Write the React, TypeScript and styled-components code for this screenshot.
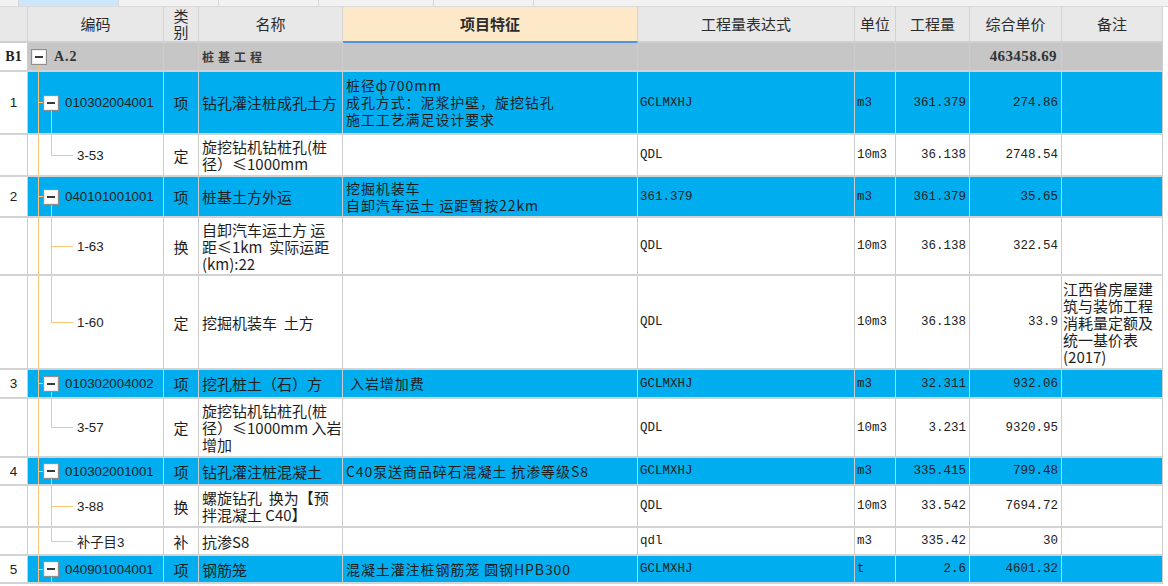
import React from 'react';
import styled, {createGlobalStyle} from 'styled-components';

type Tone = 'group' | 'item' | 'child';

interface BillRow {
    tone: Tone;
    h: number;
    num?: string;
    code: string;
    last?: boolean;
    kind: string;
    name: string;
    feature?: string;
    expr: string;
    unit: string;
    qty: string;
    price: string;
    note?: string;
}

const COLS = '28px 136px 35px 144px 295px 217px 41px 74px 92px 101px';
const ORANGE = '#fdc47a';
const BLUE = '#00aeef';

const rows: BillRow[] = [
    {tone: 'item', h: 63, num: '1', code: '010302004001', kind: '项', name: '钻孔灌注桩成孔土方', feature: '桩径ф700mm\n成孔方式：泥浆护壁，旋挖钻孔\n施工工艺满足设计要求', expr: 'GCLMXHJ', unit: 'm3', qty: '361.379', price: '274.86'},
    {tone: 'child', h: 42, code: '3-53', last: true, kind: '定', name: '旋挖钻机钻桩孔(桩\n径）≤1000mm', expr: 'QDL', unit: '10m3', qty: '36.138', price: '2748.54'},
    {tone: 'item', h: 41, num: '2', code: '040101001001', kind: '项', name: '桩基土方外运', feature: '挖掘机装车\n自卸汽车运土 运距暂按22km', expr: '361.379', unit: 'm3', qty: '361.379', price: '35.65'},
    {tone: 'child', h: 58, code: '1-63', kind: '换', name: '自卸汽车运土方 运\n距≤1km  实际运距\n(km):22', expr: 'QDL', unit: '10m3', qty: '36.138', price: '322.54'},
    {tone: 'child', h: 94, code: '1-60', last: true, kind: '定', name: '挖掘机装车  土方', expr: 'QDL', unit: '10m3', qty: '36.138', price: '33.9', note: '江西省房屋建\n筑与装饰工程\n消耗量定额及\n统一基价表\n(2017)'},
    {tone: 'item', h: 29, num: '3', code: '010302004002', kind: '项', name: '挖孔桩土（石）方', feature: ' 入岩增加费', expr: 'GCLMXHJ', unit: 'm3', qty: '32.311', price: '932.06'},
    {tone: 'child', h: 59, code: '3-57', last: true, kind: '定', name: '旋挖钻机钻桩孔(桩\n径）≤1000mm 入岩\n增加', expr: 'QDL', unit: '10m3', qty: '3.231', price: '9320.95'},
    {tone: 'item', h: 28, num: '4', code: '010302001001', kind: '项', name: '钻孔灌注桩混凝土', feature: 'C40泵送商品碎石混凝土 抗渗等级S8', expr: 'GCLMXHJ', unit: 'm3', qty: '335.415', price: '799.48'},
    {tone: 'child', h: 42, code: '3-88', kind: '换', name: '螺旋钻孔  换为【预\n拌混凝土 C40】', expr: 'QDL', unit: '10m3', qty: '33.542', price: '7694.72'},
    {tone: 'child', h: 28, code: '补子目3', last: true, kind: '补', name: '抗渗S8', expr: 'qdl', unit: 'm3', qty: '335.42', price: '30'},
    {tone: 'item', h: 28, num: '5', code: '040901004001', kind: '项', name: '钢筋笼', feature: '混凝土灌注桩钢筋笼 圆钢HPB300', expr: 'GCLMXHJ', unit: 't', qty: '2.6', price: '4601.32'},
];

const headers = ['', '编码', '类\n别', '名称', '项目特征', '工程量表达式', '单位', '工程量', '综合单价', '备注'];

export default function App() {
    return (
        <Page>
            <GlobalStyle/>
            <TabStrip>
                {[19, 100, 100, 100, 115, 100].map((w, i) => (
                    <Tab key={i} $w={w} $active={i === 1}/>
                ))}
            </TabStrip>
            <HeaderRow>
                {headers.map((text, i) => (
                    <HeadCell key={i} $hl={text === '项目特征'}>{text}</HeadCell>
                ))}
            </HeaderRow>
            <Row $h={29} $tone="group">
                <NumCell $bold>B1</NumCell>
                <CodeCell $tree="group" $last={false}>
                    <Toggle $gap={7}/>
                    <GroupCode>A.2</GroupCode>
                </CodeCell>
                <Cell/>
                <GroupName>桩基工程</GroupName>
                <Cell/>
                <Cell/>
                <Cell/>
                <Cell/>
                <GroupTotal>463458.69</GroupTotal>
                <Cell/>
            </Row>
            {rows.map((r, i) => (
                <Row key={i} $h={r.h} $tone={r.tone}>
                    <NumCell>{r.num}</NumCell>
                    <CodeCell $tree={r.tone} $last={!!r.last}>
                        {r.tone === 'item' && <Toggle $gap={6}/>}
                        {r.code}
                    </CodeCell>
                    <KindCell>{r.kind}</KindCell>
                    <TextCell>{r.name}</TextCell>
                    <FeatureCell>{r.feature}</FeatureCell>
                    <MonoCell>{r.expr}</MonoCell>
                    <MonoCell>{r.unit}</MonoCell>
                    <MonoCell $right>{r.qty}</MonoCell>
                    <MonoCell $right>{r.price}</MonoCell>
                    <NoteCell>{r.note}</NoteCell>
                </Row>
            ))}
        </Page>
    );
}

const line = (pos: string, size: string) => `linear-gradient(${ORANGE}, ${ORANGE}) ${pos} / ${size} no-repeat`;

const treeLines = (tree: Tone, last: boolean) => {
    if (tree === 'group') return line('10px 100%', '1px calc(50% - 8px)');
    if (tree === 'item') {
        return [
            line('10px 0', '1px 100%'),
            line('10px 50%', '5px 1px'),
            line('23px 100%', '1px calc(50% - 8px)'),
        ].join(', ');
    }
    return [
        line('10px 0', '1px 100%'),
        last ? line('23px 0', '1px 50%') : line('23px 0', '1px 100%'),
        line('23px 50%', '22px 1px'),
    ].join(', ');
};

const GlobalStyle = createGlobalStyle`
    html, body {
        margin: 0;
        padding: 0;
        background: #fff;
        overflow: hidden;
    }
    body {
        font-family: "Noto Sans CJK SC", sans-serif;
        color: #1e1e1e;
    }
`;

const Page = styled.div`
    width: 1168px;
    height: 586px;
    overflow: hidden;
`;

const TabStrip = styled.div`
    display: flex;
    height: 6px;
    background: #f2f2f2;
    border-bottom: 1px solid #dadada;
`;

const Tab = styled.div<{$w: number; $active: boolean}>`
    width: ${p => p.$w}px;
    flex: none;
    box-sizing: border-box;
    border-right: 1px solid #d6d6d6;
    background: ${p => p.$active ? '#cde6fb' : 'transparent'};
`;

const HeaderRow = styled.div`
    display: grid;
    grid-template-columns: ${COLS};
    width: 1163px;
    height: 36px;
`;

const HeadCell = styled.div<{$hl: boolean}>`
    box-sizing: border-box;
    display: flex;
    align-items: center;
    justify-content: center;
    text-align: center;
    white-space: pre;
    font-size: 15px;
    line-height: 16px;
    font-weight: ${p => p.$hl ? 700 : 400};
    color: #2c2c2c;
    background: ${p => p.$hl ? '#fde8c8' : '#e8e8e8'};
    border-right: 1px solid #d2d2d2;
    border-bottom: 2px solid ${p => p.$hl ? '#4e95ea' : '#cfcfcf'};
`;

const Row = styled.div<{$h: number; $tone: Tone}>`
    display: grid;
    grid-template-columns: ${COLS};
    width: 1163px;
    height: ${p => p.$h}px;
    background: ${p => p.$tone === 'group' ? '#c6c6c6' : p.$tone === 'item' ? BLUE : '#fff'};
`;

const Cell = styled.div`
    box-sizing: border-box;
    display: flex;
    align-items: center;
    min-width: 0;
    overflow: hidden;
    white-space: pre;
    padding: 0 3px;
    border-right: 1px solid #cdcdcd;
    border-bottom: 2px solid #d3d3d3;
`;

const NumCell = styled(Cell)<{$bold?: boolean}>`
    justify-content: center;
    padding: 0;
    background: #fff;
    font-family: ${p => p.$bold ? '"Liberation Serif", serif' : '"Liberation Sans", sans-serif'};
    font-weight: ${p => p.$bold ? 700 : 400};
    font-size: ${p => p.$bold ? 14 : 13.5}px;
    color: #222;
`;

const CodeCell = styled(Cell)<{$tree: Tone; $last: boolean}>`
    padding-left: ${p => p.$tree === 'group' ? 3 : p.$tree === 'item' ? 15 : 49}px;
    background: ${p => treeLines(p.$tree, p.$last)};
    font-family: "Liberation Sans", "Noto Sans CJK SC", sans-serif;
    font-size: 13.3px;
    color: #222;
`;

const Toggle = styled.span<{$gap: number}>`
    box-sizing: border-box;
    flex: none;
    width: 16px;
    height: 16px;
    margin-right: ${p => p.$gap}px;
    display: inline-flex;
    align-items: center;
    justify-content: center;
    background: #fff;
    border: 1px solid #8f8f8f;
    box-shadow: inset 0 0 0 1px #ececec;

    &::after {
        content: '';
        width: 8px;
        height: 2px;
        background: #3a3a3a;
    }
`;

const GroupCode = styled.span`
    font-family: "Liberation Serif", serif;
    font-weight: 700;
    font-size: 14px;
    letter-spacing: 1px;
    color: #333;
`;

const GroupName = styled(Cell)`
    font-weight: 700;
    font-size: 12px;
    letter-spacing: 4px;
    color: #3a3a3a;
`;

const GroupTotal = styled(Cell)`
    justify-content: flex-end;
    padding-right: 4px;
    font-family: "Liberation Serif", serif;
    font-weight: 700;
    font-size: 15px;
    letter-spacing: 0.4px;
    color: #333;
`;

const KindCell = styled(Cell)`
    justify-content: center;
    padding: 0;
    font-size: 15px;
`;

const TextCell = styled(Cell)`
    font-size: 15px;
    line-height: 17px;
`;

const FeatureCell = styled(Cell)`
    font-size: 14px;
    line-height: 17px;
    letter-spacing: 0.9px;
`;

const MonoCell = styled(Cell)<{$right?: boolean}>`
    justify-content: ${p => p.$right ? 'flex-end' : 'flex-start'};
    padding: ${p => p.$right ? '0 3px 0 0' : '0 0 0 2px'};
    font-family: "Liberation Mono", "Noto Sans CJK SC", monospace;
    font-size: 12.5px;
    color: #222;
`;

const NoteCell = styled(Cell)`
    padding: 0 0 0 1px;
    font-size: 15px;
    line-height: 17px;
`;
